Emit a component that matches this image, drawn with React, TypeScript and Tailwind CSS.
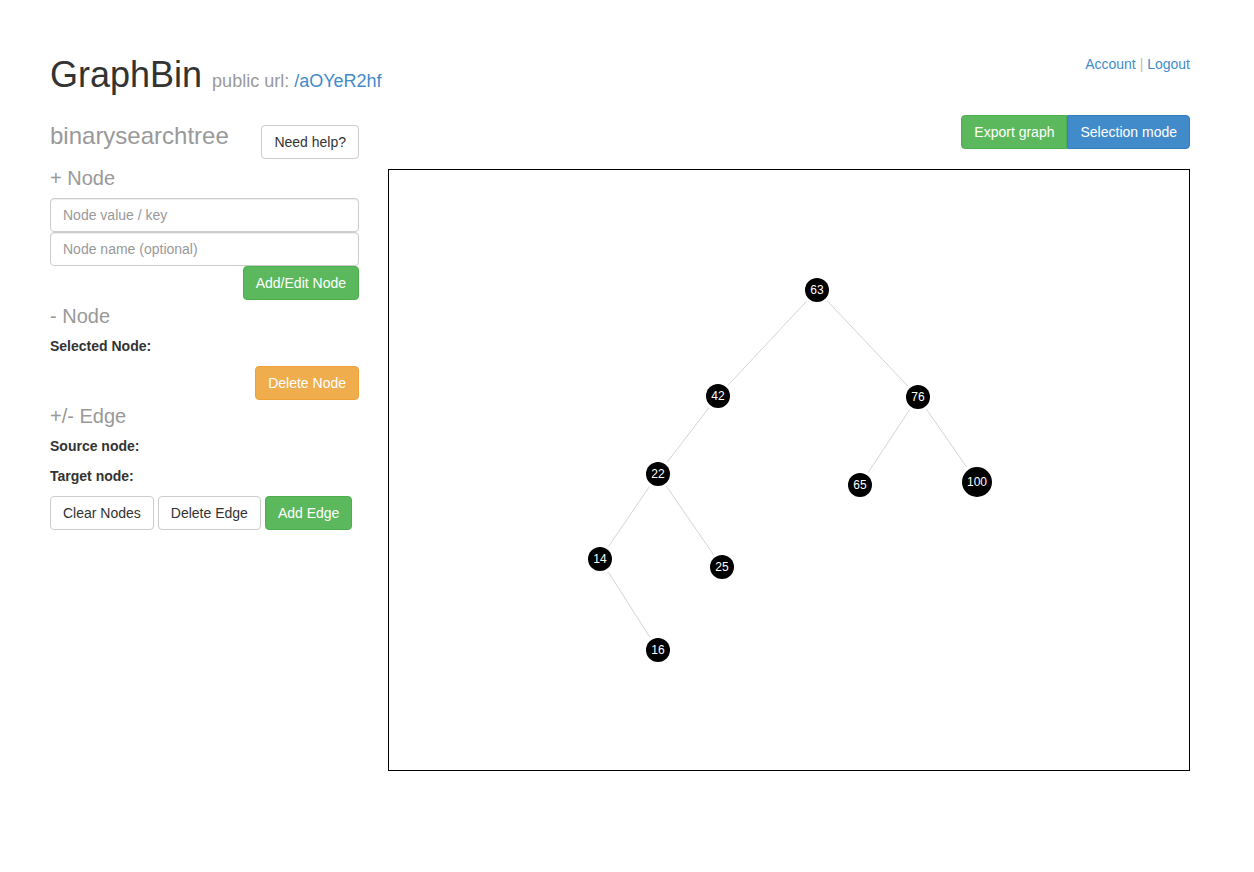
import React from "react";

type GNode = { id: string; x: number; y: number; r: number };

// node coordinates are relative to the canvas box
const nodes: GNode[] = [
  { id: "63", x: 428, y: 120, r: 12 },
  { id: "42", x: 329, y: 226, r: 12 },
  { id: "76", x: 529, y: 227, r: 12 },
  { id: "22", x: 269, y: 304, r: 12 },
  { id: "65", x: 471, y: 315, r: 12 },
  { id: "100", x: 588, y: 312, r: 15 },
  { id: "14", x: 211, y: 389, r: 12 },
  { id: "25", x: 333, y: 397, r: 12 },
  { id: "16", x: 269, y: 480, r: 12 },
];

const edges: [string, string][] = [
  ["63", "42"],
  ["63", "76"],
  ["42", "22"],
  ["76", "65"],
  ["76", "100"],
  ["22", "14"],
  ["22", "25"],
  ["14", "16"],
];

const btn =
  "h-[34px] px-3 text-[14px] leading-[20px] rounded-[4px] border whitespace-nowrap";

function Graph() {
  const byId = (id: string) => nodes.find((n) => n.id === id)!;
  return (
    <svg width="800" height="600" className="block">
      {edges.map(([a, b]) => {
        const p = byId(a);
        const q = byId(b);
        const dx = q.x - p.x;
        const dy = q.y - p.y;
        const len = Math.sqrt(dx * dx + dy * dy);
        const ux = dx / len;
        const uy = dy / len;
        return (
          <line
            key={a + b}
            x1={p.x + ux * (p.r + 3)}
            y1={p.y + uy * (p.r + 3)}
            x2={q.x - ux * (q.r + 3)}
            y2={q.y - uy * (q.r + 3)}
            stroke="#d4d4d4"
            strokeWidth="1"
          />
        );
      })}
      {nodes.map((n) => (
        <g key={n.id}>
          <circle cx={n.x} cy={n.y} r={n.r} fill="#000" />
          <text
            x={n.x}
            y={n.y + 4}
            textAnchor="middle"
            fill="#fff"
            fontSize="12"
            fontFamily="'Liberation Sans', Arial, sans-serif"
          >
            {n.id}
          </text>
        </g>
      ))}
    </svg>
  );
}

export default function App() {
  return (
    <div className="min-h-screen bg-white pt-[55px] text-[14px] text-[#333] font-['Liberation_Sans',Arial,sans-serif]">
      <div className="ml-[50px] w-[1140px]">
        <div className="flex h-[40px] items-start justify-between">
          <h1 className="text-[36px] leading-[40px] font-normal">
            GraphBin{" "}
            <span className="text-[18px] leading-[20px] text-[#999]">
              public url: <a className="text-[#428bca]">/aOYeR2hf</a>
            </span>
          </h1>
          <div className="leading-[20px] mt-[-1px]">
            <a className="text-[#428bca]">Account</a>{" "}
            <span className="text-[#c8b9a6]">|</span>{" "}
            <a className="text-[#428bca]">Logout</a>
          </div>
        </div>

        <div className="mt-[20px] flex gap-[29px]">
          <div className="w-[309px] shrink-0">
            <div className="flex items-start justify-between">
              <h3 className="mt-[8px] text-[24px] leading-[26px] text-[#999]">
                binarysearchtree
              </h3>
              <button className={`${btn} mt-[10px] bg-white border-[#ccc] text-[#333]`}>
                Need help?
              </button>
            </div>

            <h3 className="mt-[8px] text-[20px] leading-[22px] text-[#999]">+ Node</h3>
            <div className="mt-[9px] flex flex-col">
              <input
                placeholder="Node value / key"
                className="h-[34px] w-full rounded-[4px] border border-[#ccc] px-3 text-[14px] placeholder:text-[#999] shadow-[inset_0_1px_1px_rgba(0,0,0,0.075)] outline-none"
              />
              <input
                placeholder="Node name (optional)"
                className="h-[34px] w-full rounded-[4px] border border-[#ccc] px-3 text-[14px] placeholder:text-[#999] shadow-[inset_0_1px_1px_rgba(0,0,0,0.075)] outline-none"
              />
              <div className="flex justify-end">
                <button className={`${btn} bg-[#5cb85c] border-[#4cae4c] text-white`}>
                  Add/Edit Node
                </button>
              </div>
            </div>

            <h3 className="mt-[5px] text-[20px] leading-[22px] text-[#999]">- Node</h3>
            <div className="mt-[9px] font-bold leading-[20px]">Selected Node:</div>
            <div className="mt-[10px] flex justify-end">
              <button className={`${btn} bg-[#f0ad4e] border-[#eea236] text-white`}>
                Delete Node
              </button>
            </div>

            <h3 className="mt-[5px] text-[20px] leading-[22px] text-[#999]">+/- Edge</h3>
            <div className="mt-[9px] font-bold leading-[20px]">Source node:</div>
            <div className="mt-[10px] font-bold leading-[20px]">Target node:</div>
            <div className="mt-[10px] flex gap-[4px]">
              <button className={`${btn} bg-white border-[#ccc] text-[#333]`}>Clear Nodes</button>
              <button className={`${btn} bg-white border-[#ccc] text-[#333]`}>Delete Edge</button>
              <button className={`${btn} bg-[#5cb85c] border-[#4cae4c] text-white`}>Add Edge</button>
            </div>
          </div>

          <div className="flex-1">
            <div className="flex justify-end">
              <button className={`${btn} rounded-r-none bg-[#5cb85c] border-[#4cae4c] text-white`}>
                Export graph
              </button>
              <button className={`${btn} rounded-l-none bg-[#428bca] border-[#357ebd] text-white`}>
                Selection mode
              </button>
            </div>
            <div className="mt-[20px] h-[602px] border border-black">
              <Graph />
            </div>
          </div>
        </div>
      </div>
    </div>
  );
}
